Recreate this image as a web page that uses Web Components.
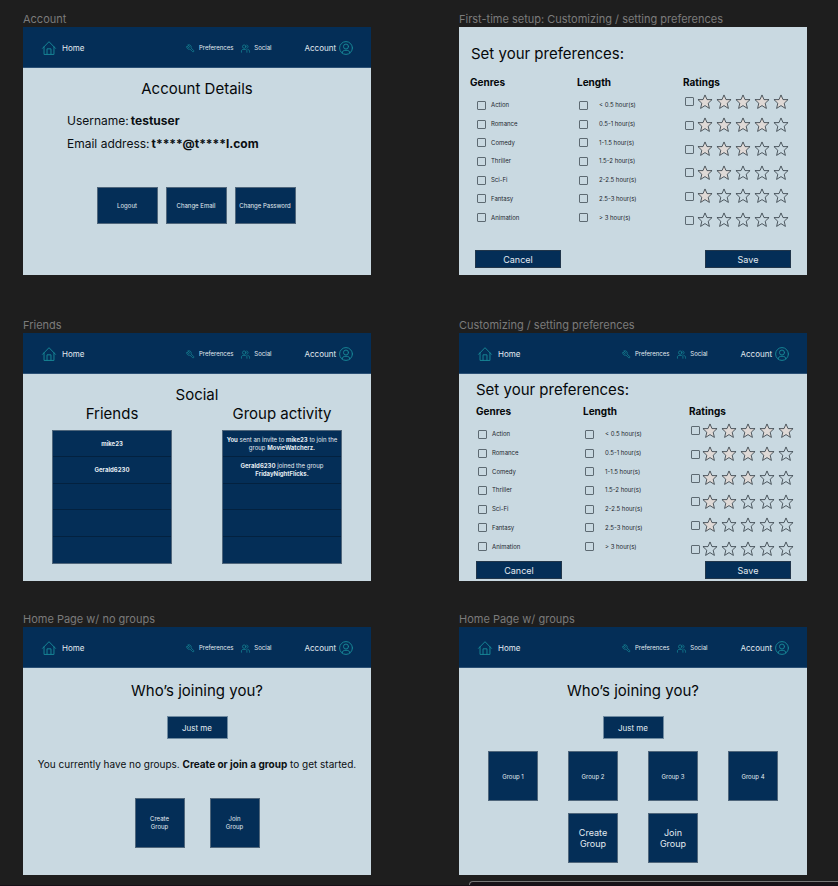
<!DOCTYPE html>
<html lang="en">
<head>
<meta charset="utf-8">
<meta name="viewport" content="width=device-width, initial-scale=1">
<title>Movie night wireframes</title>
<style>
:root{--navy:#042e57;--pale:#c9d9e1;--teal:#168595;--canvas:#1e1e1e;--edge:#4f667b}
body{margin:0;background:var(--canvas);font-family:Inter,"Liberation Sans",sans-serif;color:#0b0f12}
</style>
</head>
<body>
<wire-board></wire-board>
<script>
const define = (name, html, setup) => {
  const tpl = document.createElement('template');
  tpl.innerHTML = html;
  customElements.define(name, class extends HTMLElement {
    connectedCallback() {
      if (this.shadowRoot) return;
      const root = this.attachShadow({mode: 'open'});
      root.append(tpl.content.cloneNode(true));
      if (setup) setup(this, root);
    }
  });
};

/* Line icons on a 24-unit grid */
const ICONS = {
  home: '<path d="M1 12.5 12 1.2 23 12.5M3.5 10v13h17V10M8.6 23v-9.6h6.8V23"/>',
  wrench: '<path transform="matrix(-1 0 0 1 24 0)" d="M14.7 6.3a1 1 0 0 0 0 1.4l1.6 1.6a1 1 0 0 0 1.4 0l3.8-3.8a6 6 0 0 1-7.9 7.9l-6.900 6.900a2.100 2.100 0 0 1-3-3l6.900-6.900a6 6 0 0 1 7.900-7.900z"/>',
  users: '<circle cx="8.5" cy="7" r="4.5"/><path d="M1.2 22v-3.5c0-2.5 2-4 4.5-4h5.6c2.5 0 4.5 1.5 4.5 4V22M15.5 2.7c4.8.8 4.8 7.8 0 8.6M18.5 14.8c2.7.5 4.3 2 4.3 4.500V22"/>',
  user: '<circle cx="12" cy="12" r="11"/><circle cx="12" cy="9.5" r="4.3"/><path d="M5.5 20.5c.3-3.2 2.3-4.5 4.5-4.500h4c2.200 0 4.200 1.300 4.500 4.500"/>'
};
define('line-icon', `<style>
:host{display:block;flex:none;width:14px;height:14px;color:var(--teal)}
svg{display:block;width:100%;height:100%;fill:none;stroke:currentColor;stroke-linejoin:round;stroke-linecap:round;overflow:visible}
</style><svg viewBox="0 0 24 24" aria-hidden="true"></svg>`, (el, root) => {
  const svg = root.querySelector('svg');
  svg.innerHTML = ICONS[el.getAttribute('name')];
  svg.setAttribute('stroke-width', el.getAttribute('weight') || '1.7');
});

define('top-nav', `<style>
:host{display:block;background:var(--navy);border-bottom:1px solid #2b5075}
nav{display:flex;align-items:center;height:40px;padding:2px 18px 0 19px;box-sizing:border-box}
a{display:flex;align-items:center;color:#e3ebf1;text-decoration:none;font-size:8px;line-height:10px}
.home{gap:6px}
.small{font-size:6px;line-height:8px;gap:4px}
.small line-icon{width:9px;height:9px}
.prefs{margin-left:auto}
.social{margin-left:8px}
.account{margin-left:33px;gap:3px}
</style><nav aria-label="Main">
<a class="home" href="#home"><line-icon name="home"></line-icon>Home</a>
<a class="small prefs" href="#preferences"><line-icon name="wrench" weight="2"></line-icon>Preferences</a>
<a class="small social" href="#social"><line-icon name="users" weight="2"></line-icon>Social</a>
<a class="account" href="#account">Account<line-icon name="user"></line-icon></a>
</nav>`);

define('wire-frame', `<style>
:host{display:flex;flex-direction:column;min-width:0}
.label{margin:0;height:16px;font-size:11px;line-height:16px;font-weight:400;color:#7b7b7b;white-space:nowrap}
.screen{flex:1;min-height:248px;background:var(--pale);overflow:hidden}
</style><h2 class="label"></h2><div class="screen"><slot></slot></div>`, (el, root) => {
  root.querySelector('.label').textContent = el.getAttribute('label');
});

define('screen-title', `<style>
:host{display:block;text-align:center}
h3{margin:0;font-size:15px;line-height:20px;font-weight:400;color:#05080a}
</style><h3><slot></slot></h3>`);

define('solid-button', `<style>
:host{display:block}
button{display:flex;align-items:center;justify-content:center;width:100%;height:100%;margin:0;padding:0;box-sizing:border-box;
background:var(--navy);border:1px solid var(--edge);border-radius:0;color:#e3ebf1;font:inherit;text-align:center;cursor:pointer}
</style><button type="button"><span><slot></slot></span></button>`);

define('account-screen', `<style>
:host{display:block}
screen-title{margin-top:11px}
dl{margin:15px 44px 0;font-size:12px;line-height:14px;display:grid;gap:9px}
dl div{display:flex;gap:2px}
dd{margin:0;font-weight:700}
.actions{display:flex;justify-content:center;gap:8px;margin-top:36px;padding-right:2px}
.actions solid-button{width:61px;height:37px;font-size:6px;line-height:7px;white-space:nowrap}
</style><top-nav></top-nav><screen-title>Account Details</screen-title>
<dl><div><dt>Username:</dt><dd>testuser</dd></div><div><dt>Email address:</dt><dd>t****@t****l.com</dd></div></dl>
<div class="actions"><solid-button>Logout</solid-button><solid-button>Change Email</solid-button><solid-button>Change Password</solid-button></div>`);

define('star-row', `<style>
:host{display:flex;gap:3px}
svg{width:16px;height:16px;flex:none;stroke:#2f3940;stroke-width:1;stroke-linejoin:miter;fill:none}
svg.on{fill:#dfd9d6}
</style>`, (el, root) => {
  const n = Number(el.getAttribute('value'));
  el.setAttribute('role', 'img');
  el.setAttribute('aria-label', n + ' of 5 stars');
  for (let i = 0; i < 5; i++) root.innerHTML +=
    `<svg class="${i < n ? 'on' : ''}" viewBox="0 0 20 20" aria-hidden="true"><path d="M10 1.2 12.5 7H18.8L14 11.6 15.5 18 10 14.5 4.500 18 6 11.600 1.200 7H7.500Z"/></svg>`;
});

define('preference-form', `<style>
:host{display:block;--start:11px;--indent:7px;--last:124fr;--title-top:17px;--title-gap:12px;--foot-top:18px;--foot-start:16px;--star-gap:3px}
:host([compact]){--start:17px;--indent:2px;--last:118fr;--title-top:6px;--title-gap:5px;--foot-top:0px;--foot-start:17px;--star-gap:2px}
screen-title{margin:var(--title-top) 0 0 12px;text-align:left}
:host([compact]) screen-title{margin-left:17px}
.columns{display:grid;grid-template-columns:107fr 106fr var(--last);margin:var(--title-gap) 0 0 var(--start)}
fieldset{border:0;margin:0;padding:0;min-width:0}
legend{padding:0;font-size:10px;line-height:12px;font-weight:700;color:#05080a}
.list{display:grid;grid-auto-rows:1fr;height:131px;margin:8px 0 0 2px}
.genres{margin-left:var(--indent)}
.ratings{height:142px;margin-top:2px}
label{display:flex;align-items:center;gap:5px;font-size:6px;line-height:8px;color:#1c262d}
.lengths label{gap:11px}
.ratings label{gap:var(--star-gap)}
input{appearance:none;flex:none;width:9px;height:9px;margin:0;box-sizing:border-box;border:1px solid #5d6a72;border-radius:1px}
input:checked{background:var(--navy)}
.foot{display:flex;justify-content:space-between;margin:var(--foot-top) 16px 0 var(--foot-start)}
.foot solid-button{width:86px;height:18px;font-size:9px;line-height:11px;--edge:#21364b}
</style>
<screen-title>Set your preferences:</screen-title>
<div class="columns">
<fieldset><legend>Genres</legend><div class="list genres"></div></fieldset>
<fieldset><legend>Length</legend><div class="list lengths"></div></fieldset>
<fieldset><legend>Ratings</legend><div class="list ratings"></div></fieldset>
</div>
<div class="foot"><solid-button>Cancel</solid-button><solid-button>Save</solid-button></div>`, (el, root) => {
  const fill = (sel, items) => root.querySelector(sel).innerHTML =
    items.map(t => `<label><input type="checkbox">${t}</label>`).join('');
  fill('.genres', ['Action', 'Romance', 'Comedy', 'Thriller', 'Sci-Fi', 'Fantasy', 'Animation']);
  fill('.lengths', ['&lt; 0.5 hour(s)', '0.5-1 hour(s)', '1-1.5 hour(s)', '1.5-2 hour(s)', '2-2.5 hour(s)', '2.5-3 hour(s)', '&gt; 3 hour(s)']);
  fill('.ratings', [5, 4, 3, 2, 1, 0].map(n => `<star-row value="${n}"></star-row>`));
});

define('feed-list', `<style>
:host{display:block;text-align:center}
ul{list-style:none;margin:6px 0 0;padding:0;height:134px;box-sizing:border-box;display:grid;grid-template-rows:repeat(5,1fr);background:var(--navy);border:1px solid var(--edge);color:#e3ebf1;font-size:6px;line-height:8px}
slot{display:contents}
::slotted(li){display:grid;place-content:center;padding:0 2px}
::slotted(li:not(:last-child)){border-bottom:1px solid #03213f}
</style><screen-title></screen-title><ul><slot></slot></ul>`, (el, root) => {
  root.querySelector('screen-title').textContent = el.getAttribute('heading');
});

define('social-screen', `<style>
:host{display:block}
.main{margin-top:11px}
.lists{display:grid;grid-template-columns:1fr 1fr;gap:50px;margin:-1px 29px 0}
</style><top-nav></top-nav><screen-title class="main">Social</screen-title>
<div class="lists">
<feed-list heading="Friends"><li><b>mike23</b></li><li><b>Gerald6230</b></li><li></li><li></li><li></li></feed-list>
<feed-list heading="Group activity"><li><span><b>You</b> sent an invite to <b>mike23</b> to join the<br>group <b>MovieWatcherz.</b></span></li><li><span><b>Gerald6230</b> joined the group<br><b>FridayNightFlicks.</b></span></li><li></li><li></li><li></li></feed-list>
</div>`);

define('home-screen', `<style>
:host{display:block}
screen-title{margin-top:13px}
.solo{width:61px;height:23px;margin:15px auto 0;font-size:8px;line-height:10px;--edge:#6f8ba1}
::slotted(*){display:block}
</style><top-nav></top-nav><screen-title>Who’s joining you?</screen-title>
<solid-button class="solo">Just me</solid-button><slot></slot>`);

define('empty-groups', `<style>
:host{display:block}
p{margin:18px 0 27px;font-size:10px;line-height:14px;text-align:center;white-space:nowrap}
.tiles{display:flex;justify-content:center;gap:25px}
solid-button{width:50px;height:50px;font-size:6px;line-height:8px}
</style><p>You currently have no groups. <b>Create or join a group</b> to get started.</p>
<div class="tiles"><solid-button>Create<br>Group</solid-button><solid-button>Join<br>Group</solid-button></div>`);

define('group-tiles', `<style>
:host{display:block}
.tiles{display:grid;grid-template-columns:repeat(4,50px);justify-content:space-between;gap:12px 0;margin:12px 29px 0}
solid-button{height:50px;font-size:6px;line-height:7px}
.big{font-size:9px;line-height:11px}
.create{grid-column:2}
</style><div class="tiles"><solid-button>Group 1</solid-button><solid-button>Group 2</solid-button><solid-button>Group 3</solid-button><solid-button>Group 4</solid-button>
<solid-button class="big create">Create<br>Group</solid-button><solid-button class="big">Join<br>Group</solid-button></div>`);

define('wire-board', `<style>
:host{display:block}
main{display:grid;grid-template-columns:minmax(0,1fr) minmax(0,1fr);column-gap:88px;padding:11px 31px 0 23px}
.mid{margin:42px 0 30px}
footer{padding-top:6px;border-bottom:1px solid #160f17}
.dock{margin-left:56%;height:4px;box-sizing:border-box;background:#171217;border:solid #777;border-width:1px 0 0 1px;border-top-left-radius:4px}
</style>
<main>
<wire-frame label="Account"><account-screen></account-screen></wire-frame>
<wire-frame label="First-time setup: Customizing / setting preferences"><preference-form></preference-form></wire-frame>
<wire-frame class="mid" label="Friends"><social-screen></social-screen></wire-frame>
<wire-frame class="mid" label="Customizing / setting preferences"><top-nav></top-nav><preference-form compact></preference-form></wire-frame>
<wire-frame label="Home Page w/ no groups"><home-screen><empty-groups></empty-groups></home-screen></wire-frame>
<wire-frame label="Home Page w/ groups"><home-screen><group-tiles></group-tiles></home-screen></wire-frame>
</main>
<footer><div class="dock"></div></footer>
`);
</script>
</body>
</html>
